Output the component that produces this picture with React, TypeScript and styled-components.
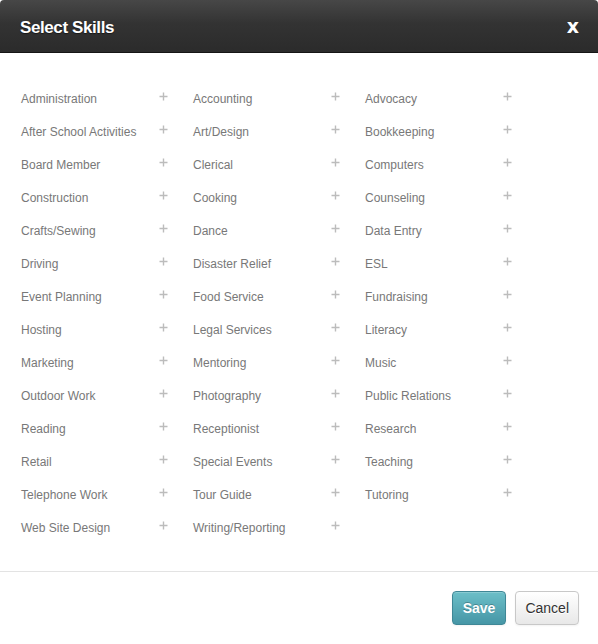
import styled, { createGlobalStyle } from "styled-components";

const GlobalStyle = createGlobalStyle`
  html, body {
    margin: 0;
    padding: 0;
    background: #fff;
  }
  body {
    font-family: "Liberation Sans", Arial, sans-serif;
  }
`;

const skills: string[][] = [
  ["Administration", "Accounting", "Advocacy"],
  ["After School Activities", "Art/Design", "Bookkeeping"],
  ["Board Member", "Clerical", "Computers"],
  ["Construction", "Cooking", "Counseling"],
  ["Crafts/Sewing", "Dance", "Data Entry"],
  ["Driving", "Disaster Relief", "ESL"],
  ["Event Planning", "Food Service", "Fundraising"],
  ["Hosting", "Legal Services", "Literacy"],
  ["Marketing", "Mentoring", "Music"],
  ["Outdoor Work", "Photography", "Public Relations"],
  ["Reading", "Receptionist", "Research"],
  ["Retail", "Special Events", "Teaching"],
  ["Telephone Work", "Tour Guide", "Tutoring"],
  ["Web Site Design", "Writing/Reporting"],
];

const Modal = styled.div`
  width: 598px;
  height: 644px;
  display: flex;
  flex-direction: column;
  background: #fff;
`;

const Header = styled.div`
  height: 53px;
  box-sizing: border-box;
  display: flex;
  align-items: center;
  justify-content: space-between;
  padding: 3px 19px 0 20px;
  background: linear-gradient(to bottom, #474747 0%, #333 45%, #2b2b2b 100%);
  border-bottom: 1px solid #151515;
  border-radius: 4px 4px 0 0;
`;

const Title = styled.h3`
  margin: 0;
  color: #fff;
  font-size: 17px;
  font-weight: 700;
  letter-spacing: -0.4px;
  text-shadow: 0 1px 1px rgba(0, 0, 0, 0.5);
`;

const Close = styled.button`
  border: 0;
  background: none;
  padding: 0;
  color: #fff;
  font-family: "DejaVu Sans", sans-serif;
  font-size: 19px;
  font-weight: 700;
  line-height: 1;
  margin-top: -2px;
  cursor: pointer;
`;

const Body = styled.div`
  flex: 1;
  padding: 29px 21px 0;
  border-bottom: 1px solid #e3e3e3;
`;

const Grid = styled.div`
  display: grid;
  grid-template-columns: repeat(3, 148px);
  column-gap: 24px;
  grid-auto-rows: 33px;
`;

const Skill = styled.div`
  display: flex;
  align-items: center;
  justify-content: space-between;
  color: #787878;
  font-size: 12px;
`;

const Plus = styled.svg`
  width: 9px;
  height: 9px;
  margin-top: -5px;
  margin-right: 1px;
  stroke: #bcbcbc;
  stroke-width: 1.4;
`;

const Footer = styled.div`
  height: 72px;
  box-sizing: border-box;
  display: flex;
  justify-content: flex-end;
  align-items: flex-start;
  gap: 9px;
  padding: 19px 19px 0 0;
`;

const Button = styled.button<{ $primary?: boolean }>`
  height: 34px;
  box-sizing: border-box;
  padding: 0 ${(p) => (p.$primary ? "10px" : "9px")};
  border-radius: 4px;
  font-family: "Liberation Sans", Arial, sans-serif;
  font-size: 14px;
  font-weight: ${(p) => (p.$primary ? 700 : 400)};
  color: ${(p) => (p.$primary ? "#fff" : "#333")};
  border: 1px solid ${(p) => (p.$primary ? "#3f8796" : "#c8c8c8")};
  background: ${(p) =>
    p.$primary
      ? "linear-gradient(to bottom, #6cbfc8, #4696a6)"
      : "linear-gradient(to bottom, #ffffff, #e8e8e8)"};
  text-shadow: ${(p) => (p.$primary ? "0 -1px 0 rgba(0,0,0,0.25)" : "0 1px 0 #fff")};
  box-shadow: inset 0 1px 0 rgba(255, 255, 255, 0.2), 0 1px 2px rgba(0, 0, 0, 0.05);
  cursor: pointer;
`;

const PlusIcon = () => (
  <Plus viewBox="0 0 9 9">
    <path d="M4.5 0.5v8M0.5 4.5h8" />
  </Plus>
);

export default function App() {
  return (
    <>
      <GlobalStyle />
      <Modal>
        <Header>
          <Title>Select Skills</Title>
          <Close>x</Close>
        </Header>
        <Body>
          <Grid>
            {skills.flat().map((name) => (
              <Skill key={name}>
                <span>{name}</span>
                <PlusIcon />
              </Skill>
            ))}
          </Grid>
        </Body>
        <Footer>
          <Button $primary>Save</Button>
          <Button>Cancel</Button>
        </Footer>
      </Modal>
    </>
  );
}
